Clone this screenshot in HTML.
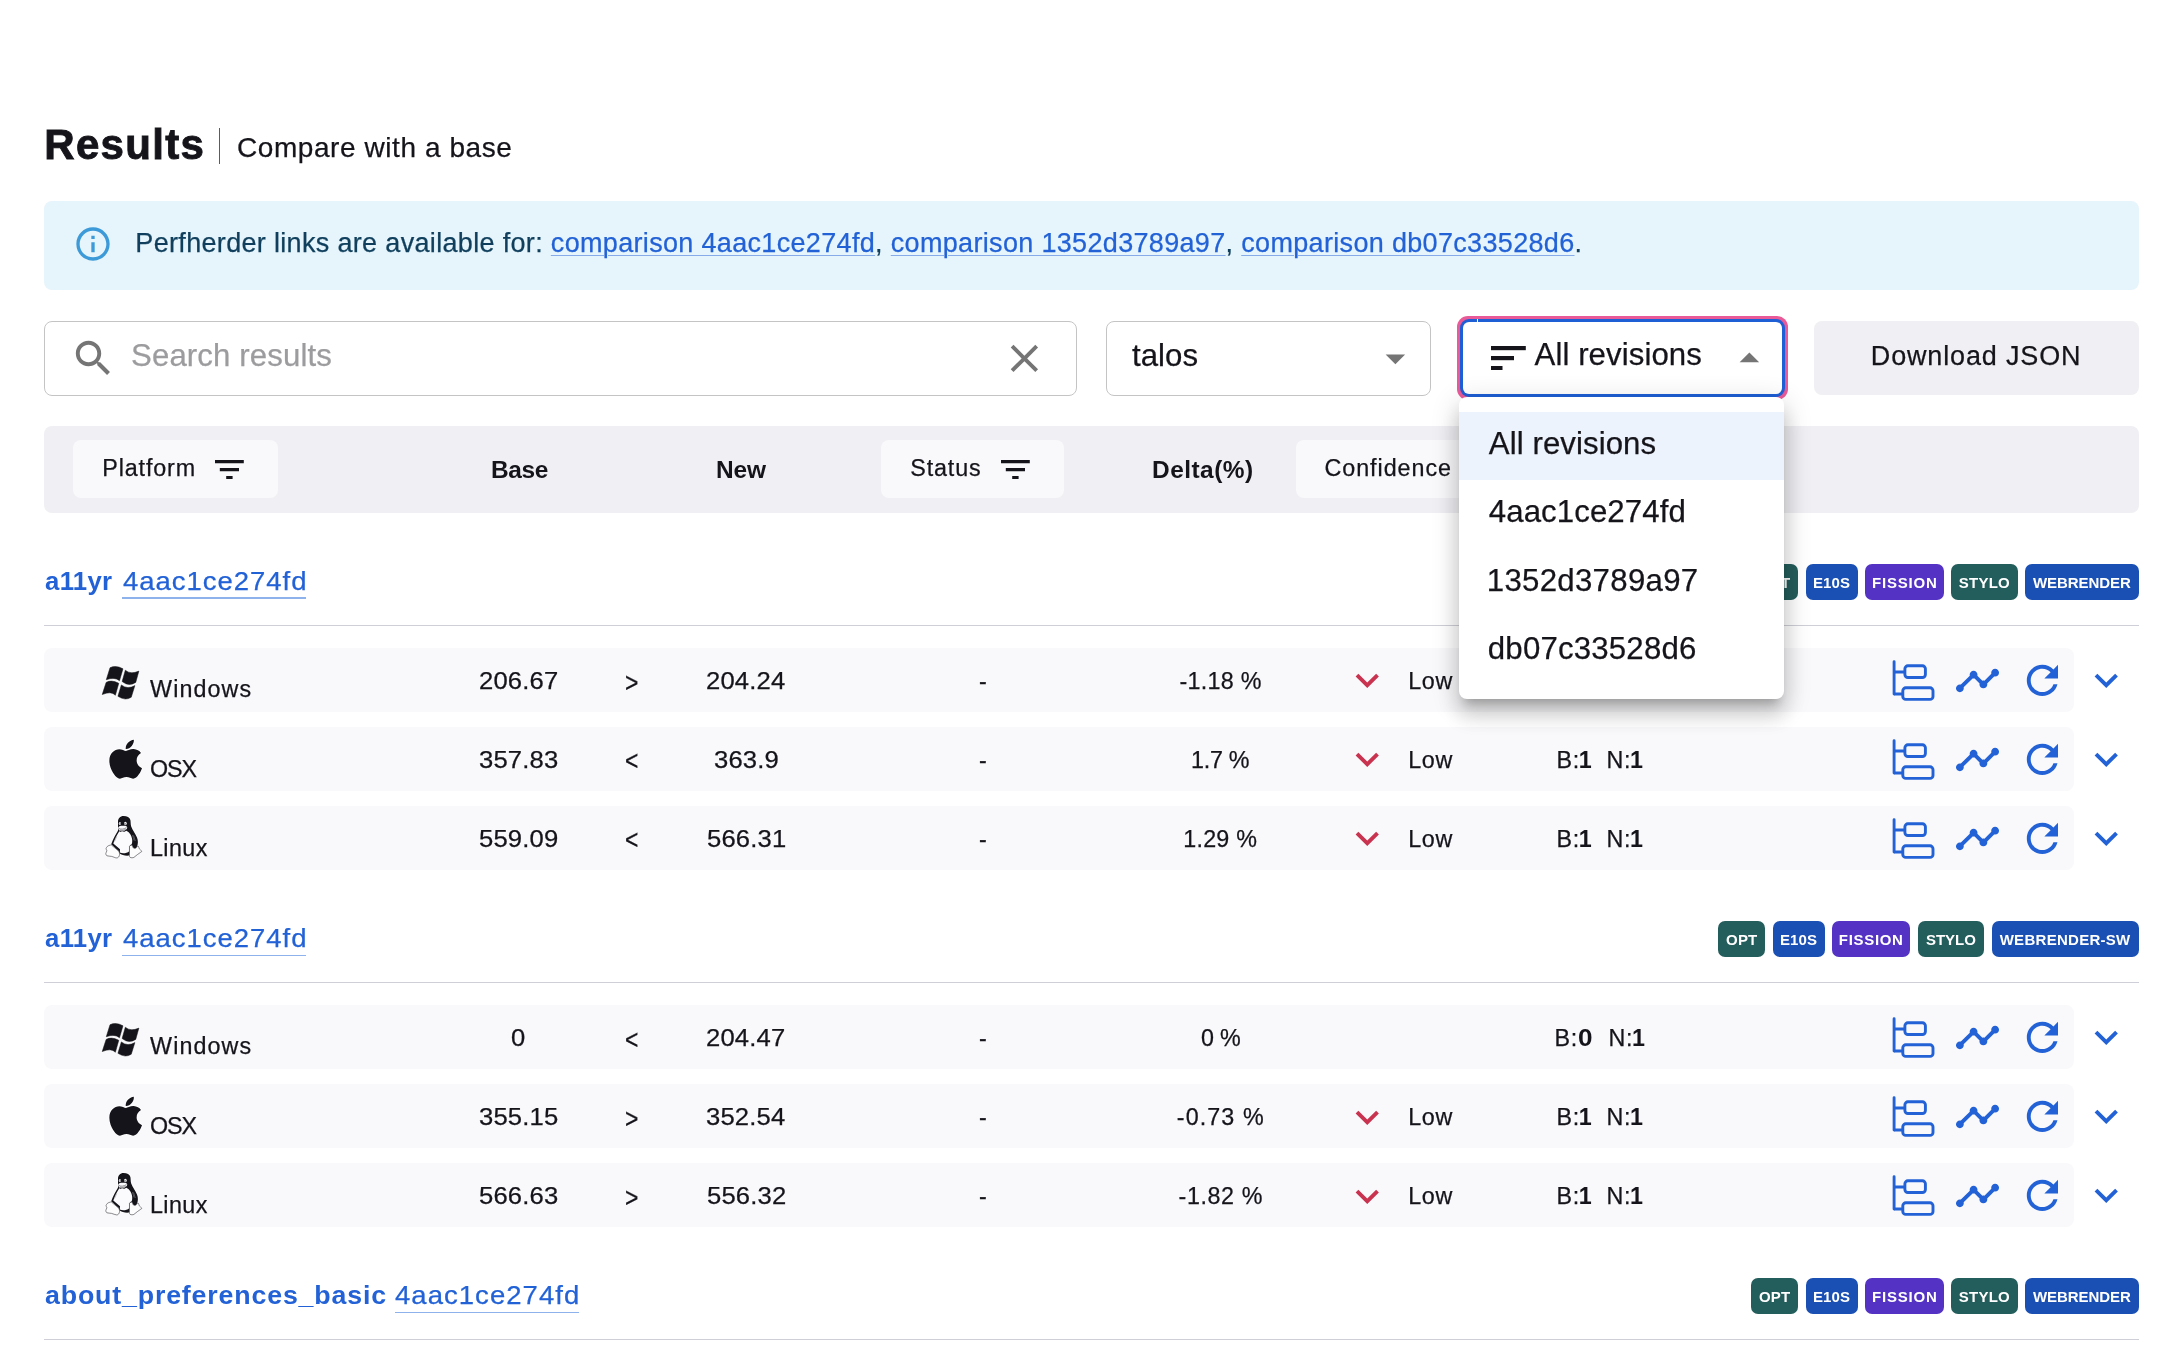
<!DOCTYPE html>
<html lang="en"><head><meta charset="utf-8"><title>PerfCompare - Results</title>
<style>
html,body{margin:0;padding:0;background:#fff;}
body{width:2184px;height:1358px;position:relative;overflow:hidden;font-family:"Liberation Sans",sans-serif;}
.t{position:absolute;white-space:pre;line-height:1;margin:0;padding:0;font-weight:400;transform-origin:0 0;-webkit-text-stroke:0.25px currentColor;}
#pg{position:absolute;left:0;top:0;width:2184px;height:1358px;will-change:transform;}
.b{position:absolute;box-sizing:border-box;display:block;}
a{color:inherit;text-decoration:none;}
</style></head><body><div id="pg">
<h1 class="t" style="left:44.25px;top:124.00px;font-size:42px;font-weight:700;letter-spacing:1.315px;color:#15141a;-webkit-text-stroke:0.9px #15141a;">Results</h1>
<div class="b" style="left:218.75px;top:128px;width:1.25px;height:35.75px;background:#5b5b66;border-radius:0px;"></div>
<span class="t" style="left:237.00px;top:134.00px;font-size:28px;letter-spacing:0.569px;color:#15141a;">Compare with a base</span>
<div class="b" style="left:44.25px;top:201.25px;width:2094.75px;height:88.50px;background:#e6f4fb;border-radius:8px;"></div>
<svg class="b" style="left:73.2px;top:224.2px;" width="40" height="40" viewBox="0 0 24 24"><path fill="#3d9ad8" d="M11 7h2v2h-2zm0 4h2v6h-2zm1-9C6.48 2 2 6.48 2 12s4.48 10 10 10 10-4.48 10-10S17.52 2 12 2zm0 18c-4.41 0-8-3.59-8-8s3.59-8 8-8 8 3.59 8 8-3.59 8-8 8z"/></svg>
<span class="t" style="left:135.30px;top:230.00px;font-size:27px;letter-spacing:0.328px;color:#0f3f5c;">Perfherder links are available for: <a href="#" style="color:#2262d6;text-decoration:underline;text-decoration-thickness:1px;text-underline-offset:3px;text-decoration-color:#86abe8">comparison 4aac1ce274fd</a>, <a href="#" style="color:#2262d6;text-decoration:underline;text-decoration-thickness:1px;text-underline-offset:3px;text-decoration-color:#86abe8">comparison 1352d3789a97</a>, <a href="#" style="color:#2262d6;text-decoration:underline;text-decoration-thickness:1px;text-underline-offset:3px;text-decoration-color:#86abe8">comparison db07c33528d6</a>.</span>
<div class="b" style="left:44.25px;top:321.25px;width:1032.50px;height:74.25px;background:#fff;border-radius:8px;border:1.5px solid #c4c4c4;"></div>
<svg class="b" style="left:70.0px;top:335.4px;" width="46.8" height="46.8" viewBox="0 0 24 24"><path fill="#757575" d="M15.5 14h-.79l-.28-.27C15.41 12.59 16 11.11 16 9.5 16 5.91 13.09 3 9.5 3S3 5.91 3 9.5 5.91 16 9.5 16c1.61 0 3.09-.59 4.23-1.57l.27.28v.79l5 4.99L20.49 19l-4.99-5zm-6 0C7.01 14 5 11.99 5 9.5S7.01 5 9.5 5 14 7.01 14 9.5 11.99 14 9.5 14z"/></svg>
<span class="t" style="left:131.00px;top:340.00px;font-size:31.2px;letter-spacing:0.116px;color:#9c9c9f;">Search results</span>
<svg class="b" style="left:1001.0px;top:335.0px;" width="46.8" height="46.8" viewBox="0 0 24 24"><path fill="#757575" d="M19 6.41L17.59 5 12 10.59 6.41 5 5 6.41 10.59 12 5 17.59 6.41 19 12 13.41 17.59 19 19 17.59 13.41 12z"/></svg>
<div class="b" style="left:1106.25px;top:321.25px;width:324.25px;height:74.25px;background:#fff;border-radius:8px;border:1.5px solid #c4c4c4;"></div>
<span class="t" style="left:1132.00px;top:340.00px;font-size:31.2px;letter-spacing:0.054px;color:#15141a;">talos</span>
<svg class="b" style="left:1371.85px;top:335.2px;" width="46.8" height="46.8" viewBox="0 0 24 24"><path fill="#757575" d="M7 10l5 5 5-5z"/></svg>
<div class="b" style="left:1457px;top:316px;width:330.70px;height:84.00px;background:#e95a98;border-radius:11px;"></div>
<div class="b" style="left:1460px;top:319px;width:324.50px;height:78.00px;background:#1f5fd6;border-radius:9px;"></div>
<div class="b" style="left:1463px;top:322px;width:318.50px;height:72.00px;background:#fff;border-radius:6px;"></div>
<div class="b" style="left:1477px;top:319px;width:1.00px;height:3.00px;background:#fff;border-radius:0px;"></div>
<svg class="b" style="left:1490.9px;top:346px;" width="36" height="24" viewBox="0 0 36 24"><rect x="0" y="0" width="34.8" height="4.2" fill="#15141a"/><rect x="0" y="10" width="23" height="4.2" fill="#15141a"/><rect x="0" y="20" width="11.5" height="4" fill="#15141a"/></svg>
<span class="t" style="left:1534.50px;top:339.00px;font-size:31.2px;letter-spacing:0.080px;color:#15141a;">All revisions</span>
<svg class="b" style="left:1726.1px;top:335.0px;" width="46.8" height="46.8" viewBox="0 0 24 24"><path fill="#757575" d="M7 14l5-5 5 5z"/></svg>
<div class="b" style="left:1813.8px;top:321.2px;width:325.20px;height:73.40px;background:#f0f0f4;border-radius:8px;"></div>
<span class="t" style="left:1870.80px;top:343.00px;font-size:27px;letter-spacing:0.843px;color:#15141a;">Download JSON</span>
<div class="b" style="left:44.25px;top:426.25px;width:2094.75px;height:86.75px;background:#f0f0f4;border-radius:8px;"></div>
<div class="b" style="left:73px;top:440px;width:205.00px;height:58.00px;background:#f9f9fb;border-radius:8px;"></div>
<span class="t" style="left:102.25px;top:457.00px;font-size:23.3px;letter-spacing:0.881px;color:#15141a;">Platform</span>
<svg class="b" style="left:215.0px;top:460.0px;" width="28.8" height="19.2" viewBox="0 0 18 12"><path fill="#15141a" d="M0 0h18v2H0zM3 5h12v2H3zM7 10h4v2H7z"/></svg>
<span class="t" style="left:491.45px;top:459.00px;font-size:23.3px;font-weight:700;-webkit-text-stroke:0;letter-spacing:-0.389px;color:#15141a;transform:scaleX(1.05);">Base</span>
<span class="t" style="left:716.15px;top:459.00px;font-size:23.3px;font-weight:700;-webkit-text-stroke:0;letter-spacing:-0.081px;color:#15141a;transform:scaleX(1.05);">New</span>
<div class="b" style="left:881.25px;top:440px;width:182.50px;height:58.00px;background:#f9f9fb;border-radius:8px;"></div>
<span class="t" style="left:910.25px;top:457.00px;font-size:23.3px;letter-spacing:0.871px;color:#15141a;">Status</span>
<svg class="b" style="left:1001.0px;top:460.0px;" width="28.8" height="19.2" viewBox="0 0 18 12"><path fill="#15141a" d="M0 0h18v2H0zM3 5h12v2H3zM7 10h4v2H7z"/></svg>
<span class="t" style="left:1152.20px;top:459.00px;font-size:23.3px;font-weight:700;-webkit-text-stroke:0;letter-spacing:0.440px;color:#15141a;transform:scaleX(1.05);">Delta(%)</span>
<div class="b" style="left:1296.25px;top:440px;width:263.75px;height:58.00px;background:#f9f9fb;border-radius:8px;"></div>
<span class="t" style="left:1324.50px;top:457.00px;font-size:23.3px;letter-spacing:0.955px;color:#15141a;">Confidence</span>
<svg class="b" style="left:1475.6px;top:460.0px;" width="28.8" height="19.2" viewBox="0 0 18 12"><path fill="#15141a" d="M0 0h18v2H0zM3 5h12v2H3zM7 10h4v2H7z"/></svg>
<span class="t" style="left:45.10px;top:569.00px;font-size:25px;font-weight:700;-webkit-text-stroke:0;letter-spacing:0.300px;color:#2262d6;transform:scaleX(1.03);">a11yr</span>
<a class="t" style="left:122.50px;top:569.00px;font-size:25px;letter-spacing:0.885px;color:#2262d6;transform:scaleX(1.1);">4aac1ce274fd</a>
<div class="b" style="left:122.0px;top:597.4px;width:183.50px;height:1.60px;background:#8db2ec;border-radius:0px;"></div>
<div class="b" style="left:1751.1px;top:563.8px;width:46.80px;height:36.10px;background:#245e5c;border-radius:7px;"></div>
<span class="t" style="left:1758.90px;top:575.00px;font-size:15px;font-weight:700;-webkit-text-stroke:0;letter-spacing:0.264px;color:#fff;">OPT</span>
<div class="b" style="left:1806.1px;top:563.8px;width:51.70px;height:36.10px;background:#1a4fb4;border-radius:7px;"></div>
<span class="t" style="left:1812.90px;top:575.00px;font-size:15px;font-weight:700;-webkit-text-stroke:0;letter-spacing:0.137px;color:#fff;">E10S</span>
<div class="b" style="left:1865.2px;top:563.8px;width:78.60px;height:36.10px;background:#5433c4;border-radius:7px;"></div>
<span class="t" style="left:1872.00px;top:575.00px;font-size:15px;font-weight:700;-webkit-text-stroke:0;letter-spacing:0.804px;color:#fff;">FISSION</span>
<div class="b" style="left:1951px;top:563.8px;width:66.90px;height:36.10px;background:#245e5c;border-radius:7px;"></div>
<span class="t" style="left:1958.80px;top:575.00px;font-size:15px;font-weight:700;-webkit-text-stroke:0;letter-spacing:0.241px;color:#fff;">STYLO</span>
<div class="b" style="left:2025.1px;top:563.8px;width:113.70px;height:36.10px;background:#1a4fb4;border-radius:7px;"></div>
<span class="t" style="left:2032.90px;top:575.00px;font-size:15px;font-weight:700;-webkit-text-stroke:0;letter-spacing:-0.050px;color:#fff;">WEBRENDER</span>
<div class="b" style="left:44.25px;top:624.7px;width:2094.75px;height:1.20px;background:#cfcfd8;border-radius:0px;"></div>
<div class="b" style="left:44.25px;top:648.0px;width:2029.35px;height:64.00px;background:#f9f9fb;border-radius:8px;"></div>
<svg class="b" style="left:96px;top:658.0px;" width="50" height="48" viewBox="0 0 50 48"><g fill="none" stroke="#fff" stroke-width="1.6" stroke-linejoin="round"><path d="M14 9.7Q19.7 6.75 27 10.8L23.5 22.8Q19.1 18.75 10.25 21.7Z"/><path d="M29.3 12.2Q34.5 16.75 42.9 13.1L39.75 24.4Q32.9 29.05 26.1 23.5Z"/><path d="M10.1 24.4Q15.35 21.35 22.8 25.3L19.4 37.3Q15.4 32.65 6.2 36.6Z"/><path d="M25.3 26.9Q31.5 31.75 38.9 27.6L35.3 39.2Q29.4 43.25 21.9 38.3Z"/></g><g fill="#15141a" stroke="#15141a" stroke-width=".5" stroke-linejoin="round"><path d="M14 9.7Q19.7 6.75 27 10.8L23.5 22.8Q19.1 18.75 10.25 21.7Z"/><path d="M29.3 12.2Q34.5 16.75 42.9 13.1L39.75 24.4Q32.9 29.05 26.1 23.5Z"/><path d="M10.1 24.4Q15.35 21.35 22.8 25.3L19.4 37.3Q15.4 32.65 6.2 36.6Z"/><path d="M25.3 26.9Q31.5 31.75 38.9 27.6L35.3 39.2Q29.4 43.25 21.9 38.3Z"/></g></svg>
<span class="t" style="left:150.10px;top:678.00px;font-size:23.3px;letter-spacing:1.090px;color:#15141a;">Windows</span>
<span class="t" style="left:478.67px;top:670.00px;font-size:23.3px;letter-spacing:0.150px;color:#15141a;transform:scaleX(1.1);">206.67</span>
<span class="t" style="left:625.30px;top:670.00px;font-size:27px;letter-spacing:0.000px;color:#15141a;transform:scaleX(0.85);">&gt;</span>
<span class="t" style="left:705.72px;top:670.00px;font-size:23.3px;letter-spacing:0.150px;color:#15141a;transform:scaleX(1.1);">204.24</span>
<span class="t" style="left:979.00px;top:670.00px;font-size:23.3px;letter-spacing:0.000px;color:#15141a;">-</span>
<span class="t" style="left:1179.50px;top:670.00px;font-size:23.3px;letter-spacing:0.288px;color:#15141a;">-1.18 %</span>
<svg class="b" style="left:1344.05px;top:657.35px;" width="46.5" height="46.5" viewBox="0 0 24 24"><path fill="#c9334f" d="M7.41 8.59L12 13.17l4.59-4.58L18 10l-6 6-6-6 1.41-1.41z"/></svg>
<span class="t" style="left:1408.25px;top:670.00px;font-size:23.3px;letter-spacing:0.668px;color:#15141a;">Low</span>
<span class="t" style="left:1556.50px;top:670.00px;font-size:23.3px;letter-spacing:0.600px;color:#15141a;">B:</span>
<span class="t" style="left:1578.84px;top:670.00px;font-size:23.3px;font-weight:700;-webkit-text-stroke:0;letter-spacing:0.000px;color:#15141a;">1</span>
<span class="t" style="left:1606.50px;top:670.00px;font-size:23.3px;letter-spacing:0.600px;color:#15141a;">N:</span>
<span class="t" style="left:1630.12px;top:670.00px;font-size:23.3px;font-weight:700;-webkit-text-stroke:0;letter-spacing:0.000px;color:#15141a;">1</span>
<svg class="b" style="left:1891.8px;top:659.6px;" width="43" height="43" viewBox="0 0 43 43"><g fill="none" stroke="#2262d6" stroke-width="2.9"><path stroke-linecap="round" d="M2.1 1.8V34"/><path d="M2.1 34H10.8M2.1 12H12.9"/><rect x="12.9" y="5.8" width="20.5" height="11.7" rx="3"/><rect x="10.8" y="27.8" width="30.2" height="11.6" rx="3"/></g></svg>
<svg class="b" style="left:1953.7px;top:657.2px;" width="47" height="47" viewBox="0 0 24 24"><path fill="#2262d6" d="M23 8c0 1.1-.9 2-2 2-.18 0-.35-.02-.51-.07l-3.56 3.55c.05.16.07.34.07.52 0 1.1-.9 2-2 2s-2-.9-2-2c0-.18.02-.36.07-.52l-2.55-2.55c-.16.05-.34.07-.52.07s-.36-.02-.52-.07l-4.55 4.56c.05.16.07.33.07.51 0 1.1-.9 2-2 2s-2-.9-2-2 .9-2 2-2c.18 0 .35.02.51.07l4.56-4.55C8.02 9.36 8 9.18 8 9c0-1.1.9-2 2-2s2 .9 2 2c0 .18-.02.36-.07.52l2.55 2.55c.16-.05.34-.07.52-.07s.36.02.52.07l3.55-3.56C19.02 8.35 19 8.18 19 8c0-1.1.9-2 2-2s2 .9 2 2z"/></svg>
<svg class="b" style="left:2019.0px;top:656.6px;" width="46.8" height="46.8" viewBox="0 0 24 24"><path fill="#2262d6" d="M17.65 6.35C16.2 4.9 14.21 4 12 4c-4.42 0-7.99 3.58-7.99 8s3.57 8 7.99 8c3.73 0 6.84-2.55 7.73-6h-2.08c-.82 2.33-3.04 4-5.65 4-3.31 0-6-2.69-6-6s2.69-6 6-6c1.66 0 3.14.69 4.22 1.78L13 11h7V4l-2.35 2.35z"/></svg>
<svg class="b" style="left:2082.75px;top:657.15px;" width="46.5" height="46.5" viewBox="0 0 24 24"><path fill="#2262d6" d="M7.41 8.59L12 13.17l4.59-4.58L18 10l-6 6-6-6 1.41-1.41z"/></svg>
<div class="b" style="left:44.25px;top:726.98px;width:2029.35px;height:64.00px;background:#f9f9fb;border-radius:8px;"></div>
<svg class="b" style="left:109.05px;top:736.78px;overflow:visible;" width="33.33" height="44.44" viewBox="0 0 384 512"><path fill="#15141a" stroke="#fff" stroke-width="16" paint-order="stroke" d="M318.7 268.7c-.2-36.7 16.4-64.4 50-84.8-18.8-26.9-47.2-41.7-84.7-44.6-35.5-2.8-74.3 20.7-88.5 20.7-15 0-49.4-19.7-76.4-19.7C63.3 141.2 4 184.8 4 273.5q0 39.3 14.4 81.2c12.8 36.7 59 126.7 107.2 125.2 25.2-.6 43-17.9 75.8-17.9 31.8 0 48.3 17.9 76.4 17.9 48.6-.7 90.4-82.5 102.6-119.3-65.2-30.7-61.7-90-61.7-91.9zm-56.6-164.2c27.3-32.4 24.8-61.9 24-72.5-24.1 1.4-52 16.4-67.9 34.9-17.5 19.8-27.8 44.3-25.6 71.9 26.1 2 49.9-11.4 69.5-34.3z"/></svg>
<span class="t" style="left:149.90px;top:758.00px;font-size:23.3px;letter-spacing:-1.030px;color:#15141a;">OSX</span>
<span class="t" style="left:479.22px;top:749.00px;font-size:23.3px;letter-spacing:0.150px;color:#15141a;transform:scaleX(1.1);">357.83</span>
<span class="t" style="left:625.30px;top:748.00px;font-size:27px;letter-spacing:0.000px;color:#15141a;transform:scaleX(0.85);">&lt;</span>
<span class="t" style="left:714.03px;top:749.00px;font-size:23.3px;letter-spacing:0.150px;color:#15141a;transform:scaleX(1.1);">363.9</span>
<span class="t" style="left:979.00px;top:749.00px;font-size:23.3px;letter-spacing:0.000px;color:#15141a;">-</span>
<span class="t" style="left:1191.00px;top:749.00px;font-size:23.3px;letter-spacing:-0.277px;color:#15141a;">1.7 %</span>
<svg class="b" style="left:1344.05px;top:736.33px;" width="46.5" height="46.5" viewBox="0 0 24 24"><path fill="#c9334f" d="M7.41 8.59L12 13.17l4.59-4.58L18 10l-6 6-6-6 1.41-1.41z"/></svg>
<span class="t" style="left:1408.25px;top:749.00px;font-size:23.3px;letter-spacing:0.668px;color:#15141a;">Low</span>
<span class="t" style="left:1556.50px;top:749.00px;font-size:23.3px;letter-spacing:0.600px;color:#15141a;">B:</span>
<span class="t" style="left:1578.84px;top:749.00px;font-size:23.3px;font-weight:700;-webkit-text-stroke:0;letter-spacing:0.000px;color:#15141a;">1</span>
<span class="t" style="left:1606.50px;top:749.00px;font-size:23.3px;letter-spacing:0.600px;color:#15141a;">N:</span>
<span class="t" style="left:1630.12px;top:749.00px;font-size:23.3px;font-weight:700;-webkit-text-stroke:0;letter-spacing:0.000px;color:#15141a;">1</span>
<svg class="b" style="left:1891.8px;top:738.58px;" width="43" height="43" viewBox="0 0 43 43"><g fill="none" stroke="#2262d6" stroke-width="2.9"><path stroke-linecap="round" d="M2.1 1.8V34"/><path d="M2.1 34H10.8M2.1 12H12.9"/><rect x="12.9" y="5.8" width="20.5" height="11.7" rx="3"/><rect x="10.8" y="27.8" width="30.2" height="11.6" rx="3"/></g></svg>
<svg class="b" style="left:1953.7px;top:736.18px;" width="47" height="47" viewBox="0 0 24 24"><path fill="#2262d6" d="M23 8c0 1.1-.9 2-2 2-.18 0-.35-.02-.51-.07l-3.56 3.55c.05.16.07.34.07.52 0 1.1-.9 2-2 2s-2-.9-2-2c0-.18.02-.36.07-.52l-2.55-2.55c-.16.05-.34.07-.52.07s-.36-.02-.52-.07l-4.55 4.56c.05.16.07.33.07.51 0 1.1-.9 2-2 2s-2-.9-2-2 .9-2 2-2c.18 0 .35.02.51.07l4.56-4.55C8.02 9.36 8 9.18 8 9c0-1.1.9-2 2-2s2 .9 2 2c0 .18-.02.36-.07.52l2.55 2.55c.16-.05.34-.07.52-.07s.36.02.52.07l3.55-3.56C19.02 8.35 19 8.18 19 8c0-1.1.9-2 2-2s2 .9 2 2z"/></svg>
<svg class="b" style="left:2019.0px;top:735.58px;" width="46.8" height="46.8" viewBox="0 0 24 24"><path fill="#2262d6" d="M17.65 6.35C16.2 4.9 14.21 4 12 4c-4.42 0-7.99 3.58-7.99 8s3.57 8 7.99 8c3.73 0 6.84-2.55 7.73-6h-2.08c-.82 2.33-3.04 4-5.65 4-3.31 0-6-2.69-6-6s2.69-6 6-6c1.66 0 3.14.69 4.22 1.78L13 11h7V4l-2.35 2.35z"/></svg>
<svg class="b" style="left:2082.75px;top:736.13px;" width="46.5" height="46.5" viewBox="0 0 24 24"><path fill="#2262d6" d="M7.41 8.59L12 13.17l4.59-4.58L18 10l-6 6-6-6 1.41-1.41z"/></svg>
<div class="b" style="left:44.25px;top:805.96px;width:2029.35px;height:64.00px;background:#f9f9fb;border-radius:8px;"></div>
<svg class="b" style="left:98px;top:809.96px;" width="50" height="56" viewBox="0 0 50 56"><g stroke-linejoin="round"><path fill="#15141a" stroke="#fff" stroke-width="1.2" paint-order="stroke" d="M25.6 6C22 6 20 8.5 20 11.5L20 17C20 19 20.3 20 19.8 21C17.5 24.5 14.8 29.5 13.2 34.2L20.6 41L21 43C24 45.6 28 45.9 31.8 45.5L31.8 36.5C33 35.3 34 35 34.5 36.5C35.5 39 38 38.5 38.8 37C40.3 34 40.2 30.5 39 27.5C37.5 24 34.5 20 33.2 16.5C32.5 14 32.8 12 32.4 10C31.8 7.5 29 6 25.6 6Z"/><path fill="#fbfbfd" d="M21.3 21.2C23 22.4 26 22.4 28.4 20.8C30 21.5 31.5 23 32.6 24.75C33.8 27 34.4 29.5 34.2 31C34.2 32.5 34 33.5 33.6 34.4C32.5 34.7 31.8 35.4 31.5 36.2L31.3 41.2C28.5 43.6 24.5 43.6 21.8 42.6L22 39.3L15.3 33.4C16.6 29.5 18.8 25 21.3 21.2Z"/><path fill="#fbfbfd" d="M20.6 16.9C21.6 16 23 15.7 24.4 15.8C26 15.9 27.6 15.6 28.8 16.6C29.6 17.6 29.2 18.6 28.2 19.6C26.8 20.8 25.4 21.7 24.2 21.7C22.8 21.6 21.6 20.8 20.8 19.8C20.2 18.8 20 17.6 20.6 16.9Z"/><path fill="none" stroke="#15141a" stroke-width=".5" d="M21 18.6C23 19.6 26 19.4 28.4 17.6M22 20.2C23.6 20.9 26 20.6 27.6 19.4"/><ellipse cx="21.9" cy="13.4" rx="1.1" ry="1.5" fill="#e8e8ec"/><ellipse cx="27.4" cy="13.5" rx="1.4" ry="1.7" fill="#f4f4f6"/><circle cx="22.2" cy="13.8" r=".55" fill="#15141a"/><circle cx="27" cy="13.9" r=".65" fill="#15141a"/><path fill="none" stroke="#8a8a90" stroke-width=".5" d="M16.5 31.5L18.8 26.4M34.5 25L36 30.5M35.6 25.5L37.3 31"/><path fill="#fdfdfe" stroke="#2a2930" stroke-width=".55" d="M12.4 35.1C11.2 35.4 10.2 35.6 9.5 36.3C8.6 37.2 8.2 38 8 38.8C8 39.6 8.9 40 8.9 40.8C8.8 41.8 7.7 42.6 7.8 43.7C7.9 44.8 8.2 45.4 8.9 45.8C10.4 46.3 12 46 13.6 46.4C15.4 46.8 17 47.9 18.6 47.9C19.6 47.9 20.3 47.6 20.6 47C21.4 46 21.6 44.8 21.5 43.7C21.4 42.7 21.2 42 20.8 41.3L13.4 35C13.1 34.9 12.8 35 12.4 35.1Z"/><path fill="#fdfdfe" stroke="#2a2930" stroke-width=".55" d="M31.5 36.2C32.2 35.3 33.2 35 34.2 35.2C34.6 36 34.6 37.4 35.6 38.2C37 39 38.6 38.2 39.2 36.2C39.8 36 40.2 36 40.4 36.3C40.9 37.1 40.9 38 41.3 38.8C42 39.8 43.2 40.4 43.9 41.3C43.8 41.7 43.4 41.9 42.9 42.1C40.4 43.6 38 45.8 35.9 47.4C34.8 47.9 33.2 47.9 32.2 47.4C31.6 46.9 31.4 46.2 31.4 45.4Z"/></g></svg>
<span class="t" style="left:149.90px;top:837.00px;font-size:23.3px;letter-spacing:0.464px;color:#15141a;">Linux</span>
<span class="t" style="left:479.22px;top:828.00px;font-size:23.3px;letter-spacing:0.150px;color:#15141a;transform:scaleX(1.1);">559.09</span>
<span class="t" style="left:625.30px;top:827.00px;font-size:27px;letter-spacing:0.000px;color:#15141a;transform:scaleX(0.85);">&lt;</span>
<span class="t" style="left:706.82px;top:828.00px;font-size:23.3px;letter-spacing:0.150px;color:#15141a;transform:scaleX(1.1);">566.31</span>
<span class="t" style="left:979.00px;top:828.00px;font-size:23.3px;letter-spacing:0.000px;color:#15141a;">-</span>
<span class="t" style="left:1183.25px;top:828.00px;font-size:23.3px;letter-spacing:0.237px;color:#15141a;">1.29 %</span>
<svg class="b" style="left:1344.05px;top:815.31px;" width="46.5" height="46.5" viewBox="0 0 24 24"><path fill="#c9334f" d="M7.41 8.59L12 13.17l4.59-4.58L18 10l-6 6-6-6 1.41-1.41z"/></svg>
<span class="t" style="left:1408.25px;top:828.00px;font-size:23.3px;letter-spacing:0.668px;color:#15141a;">Low</span>
<span class="t" style="left:1556.50px;top:828.00px;font-size:23.3px;letter-spacing:0.600px;color:#15141a;">B:</span>
<span class="t" style="left:1578.84px;top:828.00px;font-size:23.3px;font-weight:700;-webkit-text-stroke:0;letter-spacing:0.000px;color:#15141a;">1</span>
<span class="t" style="left:1606.50px;top:828.00px;font-size:23.3px;letter-spacing:0.600px;color:#15141a;">N:</span>
<span class="t" style="left:1630.12px;top:828.00px;font-size:23.3px;font-weight:700;-webkit-text-stroke:0;letter-spacing:0.000px;color:#15141a;">1</span>
<svg class="b" style="left:1891.8px;top:817.56px;" width="43" height="43" viewBox="0 0 43 43"><g fill="none" stroke="#2262d6" stroke-width="2.9"><path stroke-linecap="round" d="M2.1 1.8V34"/><path d="M2.1 34H10.8M2.1 12H12.9"/><rect x="12.9" y="5.8" width="20.5" height="11.7" rx="3"/><rect x="10.8" y="27.8" width="30.2" height="11.6" rx="3"/></g></svg>
<svg class="b" style="left:1953.7px;top:815.16px;" width="47" height="47" viewBox="0 0 24 24"><path fill="#2262d6" d="M23 8c0 1.1-.9 2-2 2-.18 0-.35-.02-.51-.07l-3.56 3.55c.05.16.07.34.07.52 0 1.1-.9 2-2 2s-2-.9-2-2c0-.18.02-.36.07-.52l-2.55-2.55c-.16.05-.34.07-.52.07s-.36-.02-.52-.07l-4.55 4.56c.05.16.07.33.07.51 0 1.1-.9 2-2 2s-2-.9-2-2 .9-2 2-2c.18 0 .35.02.51.07l4.56-4.55C8.02 9.36 8 9.18 8 9c0-1.1.9-2 2-2s2 .9 2 2c0 .18-.02.36-.07.52l2.55 2.55c.16-.05.34-.07.52-.07s.36.02.52.07l3.55-3.56C19.02 8.35 19 8.18 19 8c0-1.1.9-2 2-2s2 .9 2 2z"/></svg>
<svg class="b" style="left:2019.0px;top:814.56px;" width="46.8" height="46.8" viewBox="0 0 24 24"><path fill="#2262d6" d="M17.65 6.35C16.2 4.9 14.21 4 12 4c-4.42 0-7.99 3.58-7.99 8s3.57 8 7.99 8c3.73 0 6.84-2.55 7.73-6h-2.08c-.82 2.33-3.04 4-5.65 4-3.31 0-6-2.69-6-6s2.69-6 6-6c1.66 0 3.14.69 4.22 1.78L13 11h7V4l-2.35 2.35z"/></svg>
<svg class="b" style="left:2082.75px;top:815.11px;" width="46.5" height="46.5" viewBox="0 0 24 24"><path fill="#2262d6" d="M7.41 8.59L12 13.17l4.59-4.58L18 10l-6 6-6-6 1.41-1.41z"/></svg>
<span class="t" style="left:45.10px;top:926.00px;font-size:25px;font-weight:700;-webkit-text-stroke:0;letter-spacing:0.300px;color:#2262d6;transform:scaleX(1.03);">a11yr</span>
<a class="t" style="left:122.50px;top:926.00px;font-size:25px;letter-spacing:0.885px;color:#2262d6;transform:scaleX(1.1);">4aac1ce274fd</a>
<div class="b" style="left:122.0px;top:954.6px;width:183.50px;height:1.60px;background:#8db2ec;border-radius:0px;"></div>
<div class="b" style="left:1718.2px;top:921.0px;width:46.70px;height:36.10px;background:#245e5c;border-radius:7px;"></div>
<span class="t" style="left:1726.00px;top:932.00px;font-size:15px;font-weight:700;-webkit-text-stroke:0;letter-spacing:0.214px;color:#fff;">OPT</span>
<div class="b" style="left:1773.1px;top:921.0px;width:51.80px;height:36.10px;background:#1a4fb4;border-radius:7px;"></div>
<span class="t" style="left:1779.90px;top:932.00px;font-size:15px;font-weight:700;-webkit-text-stroke:0;letter-spacing:0.170px;color:#fff;">E10S</span>
<div class="b" style="left:1832px;top:921.0px;width:77.90px;height:36.10px;background:#5433c4;border-radius:7px;"></div>
<span class="t" style="left:1838.80px;top:932.00px;font-size:15px;font-weight:700;-webkit-text-stroke:0;letter-spacing:0.688px;color:#fff;">FISSION</span>
<div class="b" style="left:1918.2px;top:921.0px;width:65.80px;height:36.10px;background:#245e5c;border-radius:7px;"></div>
<span class="t" style="left:1926.00px;top:932.00px;font-size:15px;font-weight:700;-webkit-text-stroke:0;letter-spacing:-0.034px;color:#fff;">STYLO</span>
<div class="b" style="left:1991.9px;top:921.0px;width:147.00px;height:36.10px;background:#1a4fb4;border-radius:7px;"></div>
<span class="t" style="left:1999.70px;top:932.00px;font-size:15px;font-weight:700;-webkit-text-stroke:0;letter-spacing:0.279px;color:#fff;">WEBRENDER-SW</span>
<div class="b" style="left:44.25px;top:981.9px;width:2094.75px;height:1.20px;background:#cfcfd8;border-radius:0px;"></div>
<div class="b" style="left:44.25px;top:1005.2px;width:2029.35px;height:64.00px;background:#f9f9fb;border-radius:8px;"></div>
<svg class="b" style="left:96px;top:1015.2px;" width="50" height="48" viewBox="0 0 50 48"><g fill="none" stroke="#fff" stroke-width="1.6" stroke-linejoin="round"><path d="M14 9.7Q19.7 6.75 27 10.8L23.5 22.8Q19.1 18.75 10.25 21.7Z"/><path d="M29.3 12.2Q34.5 16.75 42.9 13.1L39.75 24.4Q32.9 29.05 26.1 23.5Z"/><path d="M10.1 24.4Q15.35 21.35 22.8 25.3L19.4 37.3Q15.4 32.65 6.2 36.6Z"/><path d="M25.3 26.9Q31.5 31.75 38.9 27.6L35.3 39.2Q29.4 43.25 21.9 38.3Z"/></g><g fill="#15141a" stroke="#15141a" stroke-width=".5" stroke-linejoin="round"><path d="M14 9.7Q19.7 6.75 27 10.8L23.5 22.8Q19.1 18.75 10.25 21.7Z"/><path d="M29.3 12.2Q34.5 16.75 42.9 13.1L39.75 24.4Q32.9 29.05 26.1 23.5Z"/><path d="M10.1 24.4Q15.35 21.35 22.8 25.3L19.4 37.3Q15.4 32.65 6.2 36.6Z"/><path d="M25.3 26.9Q31.5 31.75 38.9 27.6L35.3 39.2Q29.4 43.25 21.9 38.3Z"/></g></svg>
<span class="t" style="left:150.10px;top:1035.00px;font-size:23.3px;letter-spacing:1.090px;color:#15141a;">Windows</span>
<span class="t" style="left:511.15px;top:1027.00px;font-size:23.3px;letter-spacing:0.000px;color:#15141a;transform:scaleX(1.1);">0</span>
<span class="t" style="left:625.30px;top:1027.00px;font-size:27px;letter-spacing:0.000px;color:#15141a;transform:scaleX(0.85);">&lt;</span>
<span class="t" style="left:706.27px;top:1027.00px;font-size:23.3px;letter-spacing:0.150px;color:#15141a;transform:scaleX(1.1);">204.47</span>
<span class="t" style="left:979.00px;top:1027.00px;font-size:23.3px;letter-spacing:0.000px;color:#15141a;">-</span>
<span class="t" style="left:1201.10px;top:1027.00px;font-size:23.3px;letter-spacing:-0.215px;color:#15141a;">0 %</span>
<span class="t" style="left:1554.50px;top:1027.00px;font-size:23.3px;letter-spacing:0.600px;color:#15141a;">B:</span>
<span class="t" style="left:1577.84px;top:1027.00px;font-size:23.3px;font-weight:700;-webkit-text-stroke:0;letter-spacing:0.000px;color:#15141a;transform:scaleX(1.12);">0</span>
<span class="t" style="left:1608.50px;top:1027.00px;font-size:23.3px;letter-spacing:0.600px;color:#15141a;">N:</span>
<span class="t" style="left:1632.12px;top:1027.00px;font-size:23.3px;font-weight:700;-webkit-text-stroke:0;letter-spacing:0.000px;color:#15141a;">1</span>
<svg class="b" style="left:1891.8px;top:1016.8px;" width="43" height="43" viewBox="0 0 43 43"><g fill="none" stroke="#2262d6" stroke-width="2.9"><path stroke-linecap="round" d="M2.1 1.8V34"/><path d="M2.1 34H10.8M2.1 12H12.9"/><rect x="12.9" y="5.8" width="20.5" height="11.7" rx="3"/><rect x="10.8" y="27.8" width="30.2" height="11.6" rx="3"/></g></svg>
<svg class="b" style="left:1953.7px;top:1014.4px;" width="47" height="47" viewBox="0 0 24 24"><path fill="#2262d6" d="M23 8c0 1.1-.9 2-2 2-.18 0-.35-.02-.51-.07l-3.56 3.55c.05.16.07.34.07.52 0 1.1-.9 2-2 2s-2-.9-2-2c0-.18.02-.36.07-.52l-2.55-2.55c-.16.05-.34.07-.52.07s-.36-.02-.52-.07l-4.55 4.56c.05.16.07.33.07.51 0 1.1-.9 2-2 2s-2-.9-2-2 .9-2 2-2c.18 0 .35.02.51.07l4.56-4.55C8.02 9.36 8 9.18 8 9c0-1.1.9-2 2-2s2 .9 2 2c0 .18-.02.36-.07.52l2.55 2.55c.16-.05.34-.07.52-.07s.36.02.52.07l3.55-3.56C19.02 8.35 19 8.18 19 8c0-1.1.9-2 2-2s2 .9 2 2z"/></svg>
<svg class="b" style="left:2019.0px;top:1013.8px;" width="46.8" height="46.8" viewBox="0 0 24 24"><path fill="#2262d6" d="M17.65 6.35C16.2 4.9 14.21 4 12 4c-4.42 0-7.99 3.58-7.99 8s3.57 8 7.99 8c3.73 0 6.84-2.55 7.73-6h-2.08c-.82 2.33-3.04 4-5.65 4-3.31 0-6-2.69-6-6s2.69-6 6-6c1.66 0 3.14.69 4.22 1.78L13 11h7V4l-2.35 2.35z"/></svg>
<svg class="b" style="left:2082.75px;top:1014.35px;" width="46.5" height="46.5" viewBox="0 0 24 24"><path fill="#2262d6" d="M7.41 8.59L12 13.17l4.59-4.58L18 10l-6 6-6-6 1.41-1.41z"/></svg>
<div class="b" style="left:44.25px;top:1084.18px;width:2029.35px;height:64.00px;background:#f9f9fb;border-radius:8px;"></div>
<svg class="b" style="left:109.05px;top:1093.98px;overflow:visible;" width="33.33" height="44.44" viewBox="0 0 384 512"><path fill="#15141a" stroke="#fff" stroke-width="16" paint-order="stroke" d="M318.7 268.7c-.2-36.7 16.4-64.4 50-84.8-18.8-26.9-47.2-41.7-84.7-44.6-35.5-2.8-74.3 20.7-88.5 20.7-15 0-49.4-19.7-76.4-19.7C63.3 141.2 4 184.8 4 273.5q0 39.3 14.4 81.2c12.8 36.7 59 126.7 107.2 125.2 25.2-.6 43-17.9 75.8-17.9 31.8 0 48.3 17.9 76.4 17.9 48.6-.7 90.4-82.5 102.6-119.3-65.2-30.7-61.7-90-61.7-91.9zm-56.6-164.2c27.3-32.4 24.8-61.9 24-72.5-24.1 1.4-52 16.4-67.9 34.9-17.5 19.8-27.8 44.3-25.6 71.9 26.1 2 49.9-11.4 69.5-34.3z"/></svg>
<span class="t" style="left:149.90px;top:1115.00px;font-size:23.3px;letter-spacing:-1.030px;color:#15141a;">OSX</span>
<span class="t" style="left:479.22px;top:1106.00px;font-size:23.3px;letter-spacing:0.150px;color:#15141a;transform:scaleX(1.1);">355.15</span>
<span class="t" style="left:625.30px;top:1106.00px;font-size:27px;letter-spacing:0.000px;color:#15141a;transform:scaleX(0.85);">&gt;</span>
<span class="t" style="left:706.27px;top:1106.00px;font-size:23.3px;letter-spacing:0.150px;color:#15141a;transform:scaleX(1.1);">352.54</span>
<span class="t" style="left:979.00px;top:1106.00px;font-size:23.3px;letter-spacing:0.000px;color:#15141a;">-</span>
<span class="t" style="left:1176.80px;top:1106.00px;font-size:23.3px;letter-spacing:1.088px;color:#15141a;">-0.73 %</span>
<svg class="b" style="left:1344.05px;top:1093.53px;" width="46.5" height="46.5" viewBox="0 0 24 24"><path fill="#c9334f" d="M7.41 8.59L12 13.17l4.59-4.58L18 10l-6 6-6-6 1.41-1.41z"/></svg>
<span class="t" style="left:1408.25px;top:1106.00px;font-size:23.3px;letter-spacing:0.668px;color:#15141a;">Low</span>
<span class="t" style="left:1556.50px;top:1106.00px;font-size:23.3px;letter-spacing:0.600px;color:#15141a;">B:</span>
<span class="t" style="left:1578.84px;top:1106.00px;font-size:23.3px;font-weight:700;-webkit-text-stroke:0;letter-spacing:0.000px;color:#15141a;">1</span>
<span class="t" style="left:1606.50px;top:1106.00px;font-size:23.3px;letter-spacing:0.600px;color:#15141a;">N:</span>
<span class="t" style="left:1630.12px;top:1106.00px;font-size:23.3px;font-weight:700;-webkit-text-stroke:0;letter-spacing:0.000px;color:#15141a;">1</span>
<svg class="b" style="left:1891.8px;top:1095.78px;" width="43" height="43" viewBox="0 0 43 43"><g fill="none" stroke="#2262d6" stroke-width="2.9"><path stroke-linecap="round" d="M2.1 1.8V34"/><path d="M2.1 34H10.8M2.1 12H12.9"/><rect x="12.9" y="5.8" width="20.5" height="11.7" rx="3"/><rect x="10.8" y="27.8" width="30.2" height="11.6" rx="3"/></g></svg>
<svg class="b" style="left:1953.7px;top:1093.38px;" width="47" height="47" viewBox="0 0 24 24"><path fill="#2262d6" d="M23 8c0 1.1-.9 2-2 2-.18 0-.35-.02-.51-.07l-3.56 3.55c.05.16.07.34.07.52 0 1.1-.9 2-2 2s-2-.9-2-2c0-.18.02-.36.07-.52l-2.55-2.55c-.16.05-.34.07-.52.07s-.36-.02-.52-.07l-4.55 4.56c.05.16.07.33.07.51 0 1.1-.9 2-2 2s-2-.9-2-2 .9-2 2-2c.18 0 .35.02.51.07l4.56-4.55C8.02 9.36 8 9.18 8 9c0-1.1.9-2 2-2s2 .9 2 2c0 .18-.02.36-.07.52l2.55 2.55c.16-.05.34-.07.52-.07s.36.02.52.07l3.55-3.56C19.02 8.35 19 8.18 19 8c0-1.1.9-2 2-2s2 .9 2 2z"/></svg>
<svg class="b" style="left:2019.0px;top:1092.78px;" width="46.8" height="46.8" viewBox="0 0 24 24"><path fill="#2262d6" d="M17.65 6.35C16.2 4.9 14.21 4 12 4c-4.42 0-7.99 3.58-7.99 8s3.57 8 7.99 8c3.73 0 6.84-2.55 7.73-6h-2.08c-.82 2.33-3.04 4-5.65 4-3.31 0-6-2.69-6-6s2.69-6 6-6c1.66 0 3.14.69 4.22 1.78L13 11h7V4l-2.35 2.35z"/></svg>
<svg class="b" style="left:2082.75px;top:1093.33px;" width="46.5" height="46.5" viewBox="0 0 24 24"><path fill="#2262d6" d="M7.41 8.59L12 13.17l4.59-4.58L18 10l-6 6-6-6 1.41-1.41z"/></svg>
<div class="b" style="left:44.25px;top:1163.16px;width:2029.35px;height:64.00px;background:#f9f9fb;border-radius:8px;"></div>
<svg class="b" style="left:98px;top:1167.16px;" width="50" height="56" viewBox="0 0 50 56"><g stroke-linejoin="round"><path fill="#15141a" stroke="#fff" stroke-width="1.2" paint-order="stroke" d="M25.6 6C22 6 20 8.5 20 11.5L20 17C20 19 20.3 20 19.8 21C17.5 24.5 14.8 29.5 13.2 34.2L20.6 41L21 43C24 45.6 28 45.9 31.8 45.5L31.8 36.5C33 35.3 34 35 34.5 36.5C35.5 39 38 38.5 38.8 37C40.3 34 40.2 30.5 39 27.5C37.5 24 34.5 20 33.2 16.5C32.5 14 32.8 12 32.4 10C31.8 7.5 29 6 25.6 6Z"/><path fill="#fbfbfd" d="M21.3 21.2C23 22.4 26 22.4 28.4 20.8C30 21.5 31.5 23 32.6 24.75C33.8 27 34.4 29.5 34.2 31C34.2 32.5 34 33.5 33.6 34.4C32.5 34.7 31.8 35.4 31.5 36.2L31.3 41.2C28.5 43.6 24.5 43.6 21.8 42.6L22 39.3L15.3 33.4C16.6 29.5 18.8 25 21.3 21.2Z"/><path fill="#fbfbfd" d="M20.6 16.9C21.6 16 23 15.7 24.4 15.8C26 15.9 27.6 15.6 28.8 16.6C29.6 17.6 29.2 18.6 28.2 19.6C26.8 20.8 25.4 21.7 24.2 21.7C22.8 21.6 21.6 20.8 20.8 19.8C20.2 18.8 20 17.6 20.6 16.9Z"/><path fill="none" stroke="#15141a" stroke-width=".5" d="M21 18.6C23 19.6 26 19.4 28.4 17.6M22 20.2C23.6 20.9 26 20.6 27.6 19.4"/><ellipse cx="21.9" cy="13.4" rx="1.1" ry="1.5" fill="#e8e8ec"/><ellipse cx="27.4" cy="13.5" rx="1.4" ry="1.7" fill="#f4f4f6"/><circle cx="22.2" cy="13.8" r=".55" fill="#15141a"/><circle cx="27" cy="13.9" r=".65" fill="#15141a"/><path fill="none" stroke="#8a8a90" stroke-width=".5" d="M16.5 31.5L18.8 26.4M34.5 25L36 30.5M35.6 25.5L37.3 31"/><path fill="#fdfdfe" stroke="#2a2930" stroke-width=".55" d="M12.4 35.1C11.2 35.4 10.2 35.6 9.5 36.3C8.6 37.2 8.2 38 8 38.8C8 39.6 8.9 40 8.9 40.8C8.8 41.8 7.7 42.6 7.8 43.7C7.9 44.8 8.2 45.4 8.9 45.8C10.4 46.3 12 46 13.6 46.4C15.4 46.8 17 47.9 18.6 47.9C19.6 47.9 20.3 47.6 20.6 47C21.4 46 21.6 44.8 21.5 43.7C21.4 42.7 21.2 42 20.8 41.3L13.4 35C13.1 34.9 12.8 35 12.4 35.1Z"/><path fill="#fdfdfe" stroke="#2a2930" stroke-width=".55" d="M31.5 36.2C32.2 35.3 33.2 35 34.2 35.2C34.6 36 34.6 37.4 35.6 38.2C37 39 38.6 38.2 39.2 36.2C39.8 36 40.2 36 40.4 36.3C40.9 37.1 40.9 38 41.3 38.8C42 39.8 43.2 40.4 43.9 41.3C43.8 41.7 43.4 41.9 42.9 42.1C40.4 43.6 38 45.8 35.9 47.4C34.8 47.9 33.2 47.9 32.2 47.4C31.6 46.9 31.4 46.2 31.4 45.4Z"/></g></svg>
<span class="t" style="left:149.90px;top:1194.00px;font-size:23.3px;letter-spacing:0.464px;color:#15141a;">Linux</span>
<span class="t" style="left:479.22px;top:1185.00px;font-size:23.3px;letter-spacing:0.150px;color:#15141a;transform:scaleX(1.1);">566.63</span>
<span class="t" style="left:625.30px;top:1185.00px;font-size:27px;letter-spacing:0.000px;color:#15141a;transform:scaleX(0.85);">&gt;</span>
<span class="t" style="left:706.82px;top:1185.00px;font-size:23.3px;letter-spacing:0.150px;color:#15141a;transform:scaleX(1.1);">556.32</span>
<span class="t" style="left:979.00px;top:1185.00px;font-size:23.3px;letter-spacing:0.000px;color:#15141a;">-</span>
<span class="t" style="left:1178.60px;top:1185.00px;font-size:23.3px;letter-spacing:0.588px;color:#15141a;">-1.82 %</span>
<svg class="b" style="left:1344.05px;top:1172.51px;" width="46.5" height="46.5" viewBox="0 0 24 24"><path fill="#c9334f" d="M7.41 8.59L12 13.17l4.59-4.58L18 10l-6 6-6-6 1.41-1.41z"/></svg>
<span class="t" style="left:1408.25px;top:1185.00px;font-size:23.3px;letter-spacing:0.668px;color:#15141a;">Low</span>
<span class="t" style="left:1556.50px;top:1185.00px;font-size:23.3px;letter-spacing:0.600px;color:#15141a;">B:</span>
<span class="t" style="left:1578.84px;top:1185.00px;font-size:23.3px;font-weight:700;-webkit-text-stroke:0;letter-spacing:0.000px;color:#15141a;">1</span>
<span class="t" style="left:1606.50px;top:1185.00px;font-size:23.3px;letter-spacing:0.600px;color:#15141a;">N:</span>
<span class="t" style="left:1630.12px;top:1185.00px;font-size:23.3px;font-weight:700;-webkit-text-stroke:0;letter-spacing:0.000px;color:#15141a;">1</span>
<svg class="b" style="left:1891.8px;top:1174.76px;" width="43" height="43" viewBox="0 0 43 43"><g fill="none" stroke="#2262d6" stroke-width="2.9"><path stroke-linecap="round" d="M2.1 1.8V34"/><path d="M2.1 34H10.8M2.1 12H12.9"/><rect x="12.9" y="5.8" width="20.5" height="11.7" rx="3"/><rect x="10.8" y="27.8" width="30.2" height="11.6" rx="3"/></g></svg>
<svg class="b" style="left:1953.7px;top:1172.36px;" width="47" height="47" viewBox="0 0 24 24"><path fill="#2262d6" d="M23 8c0 1.1-.9 2-2 2-.18 0-.35-.02-.51-.07l-3.56 3.55c.05.16.07.34.07.52 0 1.1-.9 2-2 2s-2-.9-2-2c0-.18.02-.36.07-.52l-2.55-2.55c-.16.05-.34.07-.52.07s-.36-.02-.52-.07l-4.55 4.56c.05.16.07.33.07.51 0 1.1-.9 2-2 2s-2-.9-2-2 .9-2 2-2c.18 0 .35.02.51.07l4.56-4.55C8.02 9.36 8 9.18 8 9c0-1.1.9-2 2-2s2 .9 2 2c0 .18-.02.36-.07.52l2.55 2.55c.16-.05.34-.07.52-.07s.36.02.52.07l3.55-3.56C19.02 8.35 19 8.18 19 8c0-1.1.9-2 2-2s2 .9 2 2z"/></svg>
<svg class="b" style="left:2019.0px;top:1171.76px;" width="46.8" height="46.8" viewBox="0 0 24 24"><path fill="#2262d6" d="M17.65 6.35C16.2 4.9 14.21 4 12 4c-4.42 0-7.99 3.58-7.99 8s3.57 8 7.99 8c3.73 0 6.84-2.55 7.73-6h-2.08c-.82 2.33-3.04 4-5.65 4-3.31 0-6-2.69-6-6s2.69-6 6-6c1.66 0 3.14.69 4.22 1.78L13 11h7V4l-2.35 2.35z"/></svg>
<svg class="b" style="left:2082.75px;top:1172.31px;" width="46.5" height="46.5" viewBox="0 0 24 24"><path fill="#2262d6" d="M7.41 8.59L12 13.17l4.59-4.58L18 10l-6 6-6-6 1.41-1.41z"/></svg>
<span class="t" style="left:45.10px;top:1283.00px;font-size:25px;font-weight:700;-webkit-text-stroke:0;letter-spacing:0.784px;color:#2262d6;transform:scaleX(1.07);">about_preferences_basic</span>
<a class="t" style="left:395.40px;top:1283.00px;font-size:25px;letter-spacing:0.943px;color:#2262d6;transform:scaleX(1.1);">4aac1ce274fd</a>
<div class="b" style="left:394.9px;top:1311.8px;width:184.20px;height:1.60px;background:#8db2ec;border-radius:0px;"></div>
<div class="b" style="left:1751.1px;top:1278.2px;width:46.80px;height:36.10px;background:#245e5c;border-radius:7px;"></div>
<span class="t" style="left:1758.90px;top:1289.00px;font-size:15px;font-weight:700;-webkit-text-stroke:0;letter-spacing:0.264px;color:#fff;">OPT</span>
<div class="b" style="left:1806.1px;top:1278.2px;width:51.70px;height:36.10px;background:#1a4fb4;border-radius:7px;"></div>
<span class="t" style="left:1812.90px;top:1289.00px;font-size:15px;font-weight:700;-webkit-text-stroke:0;letter-spacing:0.137px;color:#fff;">E10S</span>
<div class="b" style="left:1865.2px;top:1278.2px;width:78.60px;height:36.10px;background:#5433c4;border-radius:7px;"></div>
<span class="t" style="left:1872.00px;top:1289.00px;font-size:15px;font-weight:700;-webkit-text-stroke:0;letter-spacing:0.804px;color:#fff;">FISSION</span>
<div class="b" style="left:1951px;top:1278.2px;width:66.90px;height:36.10px;background:#245e5c;border-radius:7px;"></div>
<span class="t" style="left:1958.80px;top:1289.00px;font-size:15px;font-weight:700;-webkit-text-stroke:0;letter-spacing:0.241px;color:#fff;">STYLO</span>
<div class="b" style="left:2025.1px;top:1278.2px;width:113.70px;height:36.10px;background:#1a4fb4;border-radius:7px;"></div>
<span class="t" style="left:2032.90px;top:1289.00px;font-size:15px;font-weight:700;-webkit-text-stroke:0;letter-spacing:-0.050px;color:#fff;">WEBRENDER</span>
<div class="b" style="left:44.25px;top:1339.1px;width:2094.75px;height:1.20px;background:#cfcfd8;border-radius:0px;"></div>
<div class="b" style="left:1459px;top:397px;width:325.40px;height:301.80px;background:#fff;border-radius:8px;box-shadow:0 10px 10px -6px rgba(0,0,0,.2),0 16px 20px 2px rgba(0,0,0,.14),0 6px 27px 4px rgba(0,0,0,.12);"></div>
<div class="b" style="left:1459px;top:412.2px;width:325.40px;height:67.60px;background:#edf3fc;border-radius:0px;"></div>
<span class="t" style="left:1488.80px;top:428.00px;font-size:31.2px;letter-spacing:0.076px;color:#15141a;">All revisions</span>
<span class="t" style="left:1488.80px;top:496.00px;font-size:31.2px;letter-spacing:0.090px;color:#15141a;">4aac1ce274fd</span>
<span class="t" style="left:1486.80px;top:565.00px;font-size:31.2px;letter-spacing:0.291px;color:#15141a;">1352d3789a97</span>
<span class="t" style="left:1487.80px;top:633.00px;font-size:31.2px;letter-spacing:0.196px;color:#15141a;">db07c33528d6</span>
</div></body></html>
